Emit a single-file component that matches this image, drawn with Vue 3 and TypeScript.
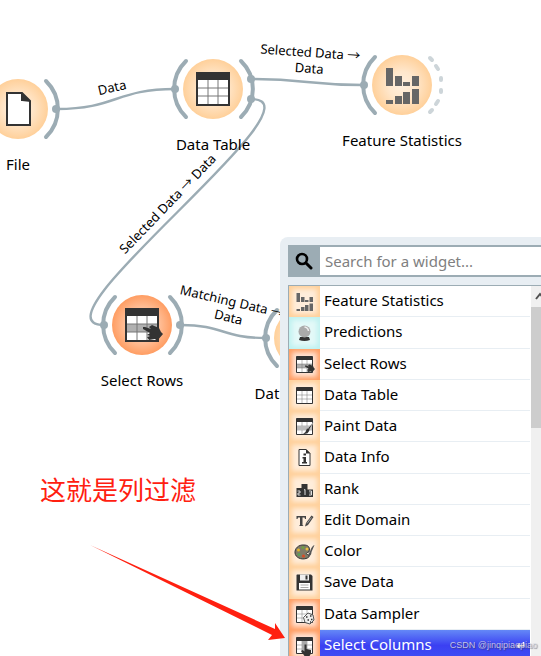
<script setup lang="ts">
import { ref } from 'vue'

type Tone = 'data' | 'model' | 'transform'

interface Widget {
  name: string
  icon: string
  tone: Tone
}

interface CanvasNode {
  name: string
  icon: string
  tone: Tone
  x: number
  y: number
  inputs: number[]
  outputs: number[]
  open?: boolean
  labelX?: number
}

interface LinkLabel {
  lines: string[]
  x: number
  y: number
  angle: number
}

const query = ref('')
const selected = ref('Select Columns')

const widgets: Widget[] = [
  { name: 'Feature Statistics', icon: 'stats', tone: 'data' },
  { name: 'Predictions', icon: 'ball', tone: 'model' },
  { name: 'Select Rows', icon: 'rows', tone: 'transform' },
  { name: 'Data Table', icon: 'table', tone: 'data' },
  { name: 'Paint Data', icon: 'paint', tone: 'data' },
  { name: 'Data Info', icon: 'info', tone: 'data' },
  { name: 'Rank', icon: 'rank', tone: 'data' },
  { name: 'Edit Domain', icon: 'edit', tone: 'data' },
  { name: 'Color', icon: 'color', tone: 'data' },
  { name: 'Save Data', icon: 'save', tone: 'data' },
  { name: 'Data Sampler', icon: 'sampler', tone: 'transform' },
  { name: 'Select Columns', icon: 'columns', tone: 'transform' },
]

const nodes: CanvasNode[] = [
  { name: 'File', icon: 'file', tone: 'data', x: 18, y: 109, inputs: [], outputs: [0] },
  { name: 'Data Table', icon: 'table', tone: 'data', x: 213, y: 89, inputs: [0], outputs: [-10, 10] },
  { name: 'Feature Statistics', icon: 'stats', tone: 'data', x: 402, y: 85, inputs: [0], outputs: [], open: true },
  { name: 'Select Rows', icon: 'rows', tone: 'transform', x: 142, y: 325, inputs: [0], outputs: [0] },
  { name: 'Dat', icon: 'table', tone: 'data', x: 304, y: 338, inputs: [0], outputs: [0], labelX: -37 },
]

const links: string[] = [
  'M57 109C116 109 116 89 175 89',
  'M251 79C307 79 307 85 363 85',
  'M251 99C331 99 24 325 104 325',
  'M181 325C223 325 223 338 265 338',
]

const linkLabels: LinkLabel[] = [
  { lines: ['Data'], x: 113, y: 92, angle: -13 },
  { lines: ['Selected Data →', 'Data'], x: 310, y: 57, angle: 4 },
  { lines: ['Selected Data → Data'], x: 171, y: 207, angle: -46 },
  { lines: ['Matching Data →', 'Data'], x: 231, y: 306, angle: 13 },
]
</script>

<template>
  <main class="workspace">
    <svg class="scheme" role="img" aria-label="Workflow">
      <defs>
        <radialGradient id="tone-data">
          <stop offset="0" stop-color="#fff0df" />
          <stop offset="0.45" stop-color="#ffe7cc" />
          <stop offset="1" stop-color="#ffd09a" />
        </radialGradient>
        <radialGradient id="tone-transform">
          <stop offset="0" stop-color="#ffe0cf" />
          <stop offset="0.45" stop-color="#ffc9a8" />
          <stop offset="1" stop-color="#ff9d62" />
        </radialGradient>

        <symbol id="icon-file" viewBox="0 0 34 34">
          <path d="M6 1H21L29 9V33H6Z" fill="#fff" stroke="#333" stroke-width="2" />
          <path d="M20 0L30 10L21 9Z" fill="#333" />
          <path d="M20 1H21L29 9H20Z" fill="#333" />
        </symbol>
        <symbol id="icon-table" viewBox="0 0 34 34">
          <path d="M1 1H33V33H1Z" fill="#fff" stroke="#333" stroke-width="2" />
          <path d="M1 1H33V8H1Z" fill="#333" />
          <path d="M12 8V32M22 8V32M2 16H32M2 24H32" stroke="#777" stroke-width="1" />
        </symbol>
        <symbol id="icon-rows" viewBox="0 0 34 34">
          <path d="M1 1H33V33H1Z" fill="#fff" stroke="#333" stroke-width="2" />
          <path d="M1 1H33V8H1Z" fill="#333" />
          <path d="M2 16H32V24H2Z" fill="#b0b0b0" />
          <path d="M12 8V32M22 8V32M2 16H32M2 24H32" stroke="#777" stroke-width="1" />
          <path
            d="M18 21L18 19L20 19L26 21L24 19L27 17L34 20L36 24L38 26L32 33L30 31L24 32L22 29L25 28L22 27L25 25Z"
            fill="#333"
          />
        </symbol>
        <symbol id="icon-stats" viewBox="0 0 34 34">
          <path d="M1 0H8V18H1ZM10 8H17V18H10ZM18 14H25V18H18ZM27 8H34V18H27Z" fill="#666" />
          <path d="M1 32H8V36H1ZM10 28H17V36H10ZM18 24H25V36H18ZM27 21H34V36H27Z" fill="#666" />
        </symbol>
      </defs>

      <path v-for="d in links" :key="d" :d="d" class="link" />

      <g v-for="(n, i) in nodes" :key="i" :transform="`translate(${n.x} ${n.y})`">
        <circle r="30" :class="['disc', n.tone]" />
        <path v-if="n.inputs.length" class="anchor" d="M-27 -28A39 39 0 0 0 -27 28" />
        <path v-if="n.outputs.length" class="anchor" d="M28 -28A39 39 0 0 1 28 28" />
        <path
          v-if="n.open"
          class="anchor idle"
          d="M28 -27L30 -25M34 -19L36 -16M39 -7L39 -5M39 5L39 7M36 16L34 19M30 25L28 27"
        />
        <circle v-for="p in n.inputs" :key="`in${p}`" class="port" cx="-38" :cy="p" r="4" />
        <circle v-for="p in n.outputs" :key="`out${p}`" class="port" cx="38" :cy="p" r="4" />
        <use :href="`#icon-${n.icon}`" x="-17" y="-17" width="34" height="34" />
        <text class="node-name" :x="n.labelX ?? 0" y="61">{{ n.name }}</text>
      </g>

      <g v-for="(l, i) in linkLabels" :key="i" :transform="`translate(${l.x} ${l.y}) rotate(${l.angle})`">
        <text v-for="(line, k) in l.lines" :key="k" class="link-name" :y="k * 16">{{ line }}</text>
      </g>
    </svg>

    <section class="menu" aria-label="Quick menu">
      <div class="search">
        <label class="search-icon" for="widget-search" aria-label="Search">
          <svg viewBox="0 0 18 18" width="18" height="18">
            <circle cx="7" cy="7" r="5" fill="none" stroke="#000" stroke-width="2.6" />
            <path d="M11 11L16 16" stroke="#000" stroke-width="3" stroke-linecap="round" />
          </svg>
        </label>
        <input id="widget-search" v-model="query" type="text" placeholder="Search for a widget..." />
      </div>

      <div class="results">
        <ul class="list">
          <li v-for="w in widgets" :key="w.name">
            <button
              type="button"
              :class="['item', { active: w.name === selected }]"
              @click="selected = w.name"
            >
              <span :class="['tile', w.tone]">
                <svg class="glyph" viewBox="0 0 34 34" aria-hidden="true">
                  <use v-if="w.icon === 'stats'" href="#icon-stats" width="34" height="34" />
                  <use v-else-if="w.icon === 'rows'" href="#icon-rows" width="34" height="34" />
                  <use v-else-if="w.icon === 'table'" href="#icon-table" width="34" height="34" />
                  <g v-else-if="w.icon === 'ball'">
                    <path d="M8 26H26L28 32Q17 36 6 32Z" fill="#333" />
                    <circle cx="17" cy="15" r="12" fill="#aaa" />
                    <path d="M17 6Q24 7 25 14" fill="none" stroke="#eee" stroke-width="3" />
                  </g>
                  <g v-else-if="w.icon === 'paint'">
                    <use href="#icon-table" width="34" height="34" />
                    <path d="M2 16H32V24H2Z" fill="#bbb" />
                    <path d="M36 7L27 23L23 21Z" fill="#333" stroke="#fff" stroke-width="1" />
                    <path d="M27 22Q27 32 14 32Q20 29 22 21Z" fill="#333" />
                  </g>
                  <g v-else-if="w.icon === 'info'">
                    <path d="M6 1H20L28 9V33H6Z" fill="#fff" stroke="#333" stroke-width="2" />
                    <path d="M20 0V9H29Z" fill="#333" />
                    <path d="M15 9H20V13H15ZM13 16H20V26H22V29H12V26H15V19H13Z" fill="#333" />
                  </g>
                  <g v-else-if="w.icon === 'rank'">
                    <path d="M1 14H11V32H1ZM11 6H23V32H11ZM23 17H34V32H23Z" fill="#333" />
                    <path
                      d="M3 20H8V24H4V28H9M16 18L18 17V28M26 20H31V28H26M27 24H31"
                      fill="none"
                      stroke="#ddd"
                      stroke-width="2"
                    />
                  </g>
                  <g v-else-if="w.icon === 'edit'">
                    <path d="M1 8H20V14H18L17 11H13V26L15 28H6L8 26V11H4L3 14H1Z" fill="#444" />
                    <path d="M18 29L20 22L31 7L35 10L24 26Z" fill="#444" />
                    <path d="M22 23L31 11" stroke="#fff" stroke-width="1" />
                  </g>
                  <g v-else-if="w.icon === 'color'">
                    <path
                      d="M16 4C5 3 -3 11 -2 20C-1 29 10 34 20 31C28 29 28 24 23 23C18 22 22 19 26 18C29 8 24 4 16 4Z"
                      fill="#807b68"
                      stroke="#333"
                      stroke-width="2"
                    />
                    <circle cx="5" cy="14" r="3" fill="#e2b52b" />
                    <circle cx="14" cy="9" r="3" fill="#6fa043" />
                    <circle cx="22" cy="12" r="3" fill="#f0c040" />
                    <circle cx="6" cy="23" r="3" fill="#58a058" />
                    <circle cx="15" cy="26" r="3" fill="#d94a24" />
                    <path d="M37 4Q31 6 28 17Q24 21 25 27Q31 25 31 18Z" fill="#555" />
                  </g>
                  <g v-else-if="w.icon === 'save'">
                    <path d="M2 1H30L33 4V33H1V2Z" fill="#333" />
                    <path d="M8 1H26V13H8Z" fill="#eee" />
                    <path d="M19 3H23V11H19Z" fill="#333" />
                    <path d="M6 18H28V31H6Z" fill="#fff" />
                    <path d="M9 22H25M9 27H25" stroke="#aaa" stroke-width="2" />
                  </g>
                  <g v-else-if="w.icon === 'sampler'">
                    <use href="#icon-table" width="34" height="34" />
                    <path d="M24 14L34 18L36 28L28 36L18 33L15 23Z" fill="#eee" stroke="#555" stroke-width="2" />
                    <path
                      d="M20 22H23M28 20H31M23 28H26M30 27H33M28 32H30"
                      stroke="#333"
                      stroke-width="3"
                    />
                  </g>
                  <g v-else>
                    <use href="#icon-table" width="34" height="34" />
                    <path d="M12 8H22V32H12Z" fill="#aaa" />
                    <path d="M17 15H21V24L30 26V33L27 38H17L10 28L13 26L17 29Z" fill="#333" />
                  </g>
                </svg>
              </span>
              <span class="name">{{ w.name }}</span>
              <svg v-if="w.name === selected" class="enter" viewBox="0 0 12 10" aria-hidden="true">
                <path d="M10 1V6H3M5 3L2 6L5 9" fill="none" stroke="#fff" stroke-width="2" />
              </svg>
            </button>
          </li>
        </ul>
        <div class="scrollbar" aria-hidden="true">
          <svg class="up" viewBox="0 0 17 21" width="17" height="21">
            <path d="M5 13L9 8L13 13" fill="none" stroke="#505050" stroke-width="2" />
          </svg>
          <div class="thumb"></div>
        </div>
      </div>
    </section>

    <svg class="annotation">
      <text class="note" x="40" y="500">这就是列过滤</text>
      <path class="pointer" d="M90 545L275 629L275 623L285 638L268 640L272 635Z" />
    </svg>

    <span class="watermark">CSDN @jinqipiaopiao</span>
  </main>
</template>

<style>
body {
  background: #fff;
}
</style>

<style scoped>
.workspace {
  position: relative;
  height: 100vh;
  overflow: hidden;
  font-family: 'Noto Sans', 'Noto Sans CJK SC', sans-serif;
  font-size: 15px;
  color: #000;
}

.scheme {
  display: block;
  width: 100%;
  height: 100%;
}

.scheme symbol {
  overflow: visible;
}

.annotation {
  position: absolute;
  inset: 0;
  width: 100%;
  height: 100%;
  pointer-events: none;
}

.link {
  fill: none;
  stroke: #9cacb4;
  stroke-width: 2.4;
}

.disc.data {
  fill: url(#tone-data);
}

.disc.transform {
  fill: url(#tone-transform);
}

.anchor {
  fill: none;
  stroke: #9cacb4;
  stroke-width: 4;
  stroke-linecap: round;
}

.anchor.idle {
  stroke: #cdd5d9;
}

.port {
  fill: #9cacb4;
}

.node-name {
  font-size: 15px;
  text-anchor: middle;
}

.link-name {
  font-size: 13px;
  text-anchor: middle;
}

.note {
  font-family: 'Noto Sans CJK SC', sans-serif;
  font-size: 26px;
  fill: #ff2010;
}

.pointer {
  fill: #ff2010;
}

.menu {
  position: absolute;
  top: 237px;
  left: 280px;
  right: -16px;
  display: flex;
  flex-direction: column;
  gap: 8px;
  padding: 8px;
  border-radius: 8px;
  background: #e8eef3;
}

.search {
  display: flex;
  height: 32px;
  box-sizing: border-box;
  border: 2px solid #9cacb4;
  border-left: 0;
  background: #9cacb4;
}

.search-icon {
  display: flex;
  align-items: center;
  justify-content: center;
  width: 32px;
}

.search input {
  flex: 1;
  min-width: 0;
  padding: 0 5px;
  border: 0;
  outline: 0;
  background: #fff;
  font: inherit;
}

.search input::placeholder {
  color: #808080;
  opacity: 1;
}

.results {
  display: flex;
  border: 1px solid #9cacb4;
  background: #fff;
}

.list {
  flex: 1;
  display: grid;
  grid-template-rows: repeat(12, 1fr);
  height: 375px;
  margin: 0;
  padding: 0;
  list-style: none;
}

.list li {
  display: flex;
  min-height: 0;
}

.item {
  flex: 1;
  display: flex;
  align-items: stretch;
  padding: 0;
  border: 0;
  background: #fff;
  color: inherit;
  font: inherit;
  text-align: left;
}

.tile {
  display: flex;
  align-items: center;
  justify-content: center;
  width: 31px;
}

.tile.data {
  background: #ffeddb;
  box-shadow: inset 0 0 5px 3px #ffd09a;
}

.tile.model {
  background: #e4f9f8;
  box-shadow: inset 0 0 5px 3px #bff1f0;
}

.tile.transform {
  background: #ffe3d4;
  box-shadow: inset 0 0 5px 3px #ff9d62;
}

.glyph {
  width: 17px;
  height: 17px;
  overflow: visible;
}

.name {
  flex: 1;
  display: flex;
  align-items: center;
  padding: 0 4px 2px;
  border-bottom: 1px solid #e8eef3;
}

.item.active {
  background: linear-gradient(#6488f7, #3b40f2 50%, #3f50f4);
  color: #fff;
}

.item.active .name {
  border-color: transparent;
}

.enter {
  align-self: center;
  width: 9px;
  height: 8px;
  margin-right: 5px;
}

.scrollbar {
  width: 17px;
  margin-left: 1px;
  background: #f0f0f0;
}

.up {
  display: block;
}

.thumb {
  height: 121px;
  background: #cdcdcd;
}

.watermark {
  position: absolute;
  right: 4px;
  bottom: 5px;
  color: rgba(220, 220, 230, 0.85);
  font: 9px/12px 'Liberation Sans', sans-serif;
  text-shadow: 1px 1px 1px rgba(60, 60, 80, 0.6);
}
</style>
